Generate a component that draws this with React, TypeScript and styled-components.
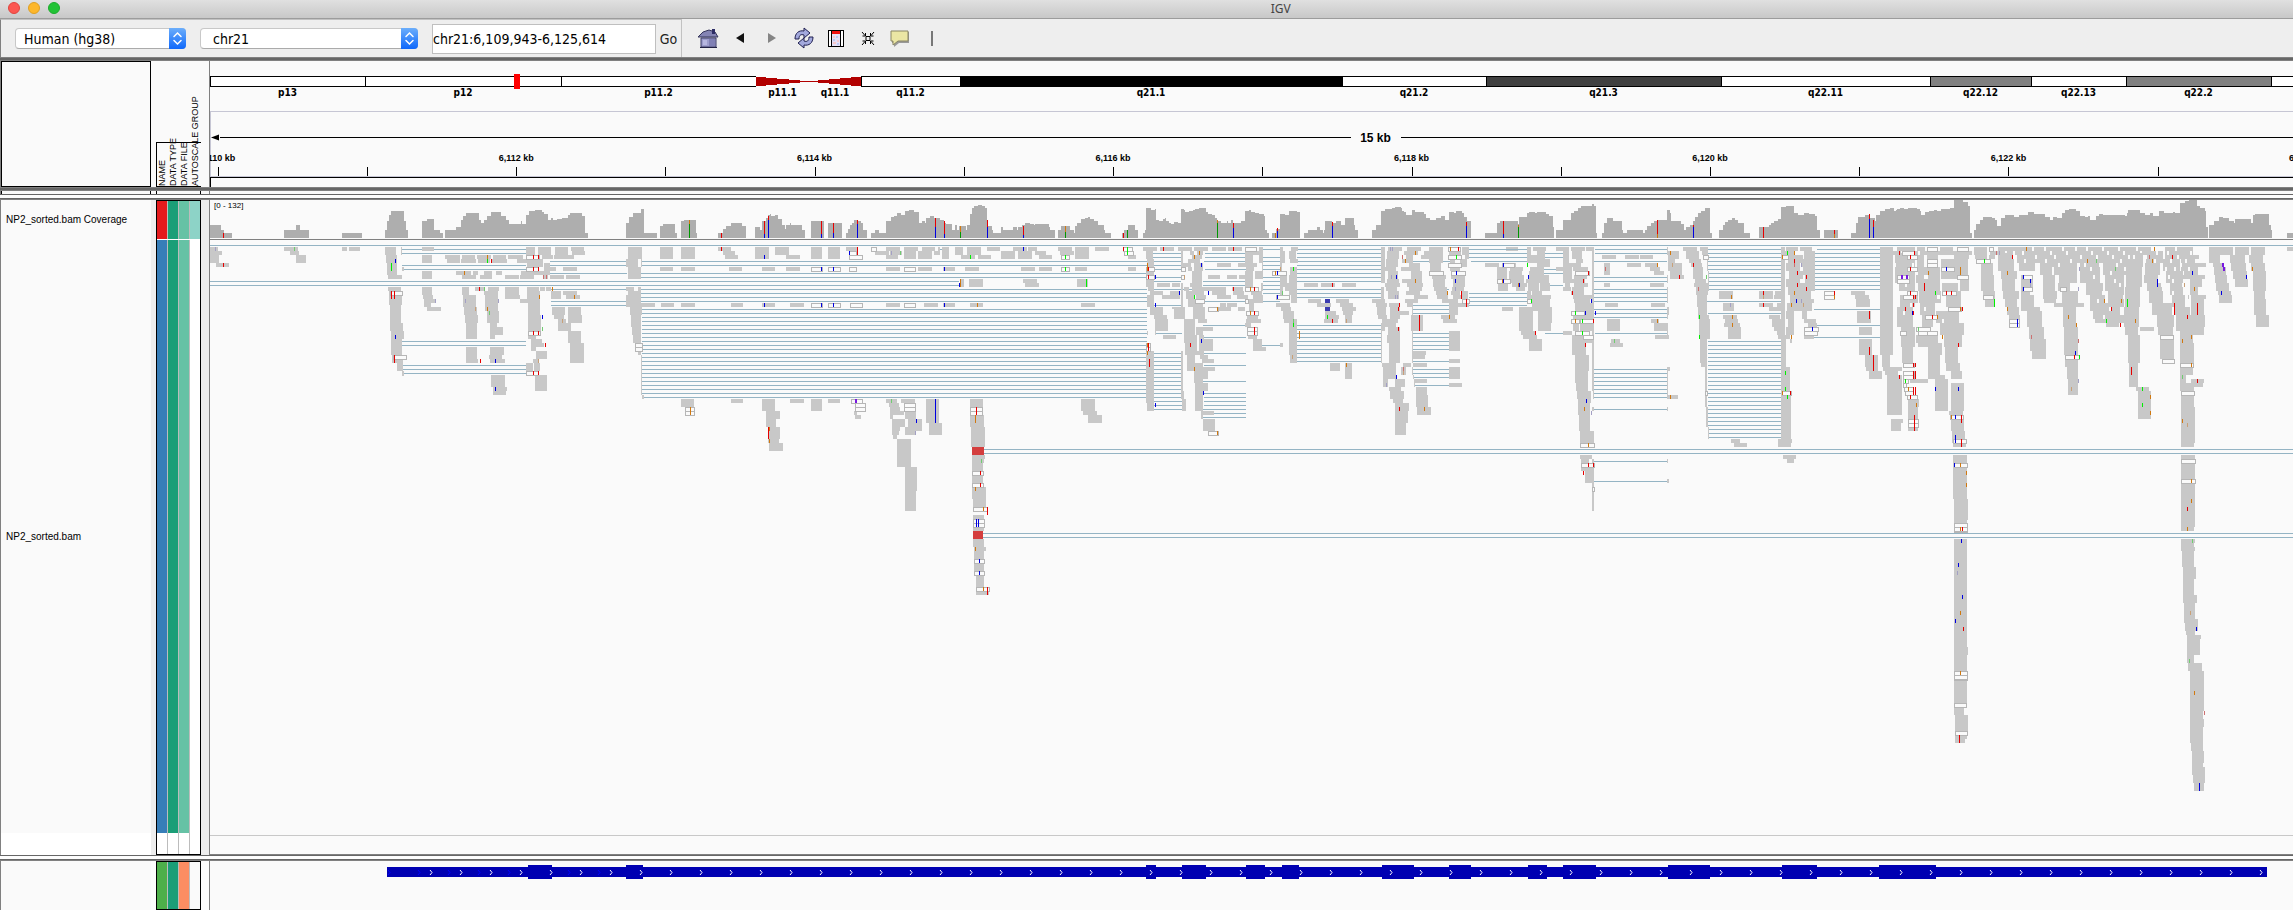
import React from "react";
import styled, { createGlobalStyle } from "styled-components";

const GlobalStyle = createGlobalStyle`
  *, *::before, *::after { box-sizing: border-box; }
  body { margin: 0; background: #fafafa; color: #000; font-family: "Liberation Sans", Arial, sans-serif; }
`;

const uiFont = `"DejaVu Sans Condensed", "Noto Sans", sans-serif`;

/* ---------- window chrome ---------- */

const Window = styled.div`
  display: flex;
  flex-direction: column;
  min-height: 100vh;
  overflow: hidden;
`;

const TitleBar = styled.header`
  display: grid;
  grid-template-columns: 127fr auto 100fr;
  align-items: center;
  height: 19px;
  padding: 0 8px;
  background: linear-gradient(#e0e0e0, #c8c8c8);
  border-bottom: 1px solid #9c9c9c;
`;

const Lights = styled.div`
  display: flex;
  gap: 8px;
  padding-bottom: 2px;
`;

const Light = styled.button<{ $fill: string; $edge: string }>`
  width: 12px;
  height: 12px;
  padding: 0;
  border-radius: 50%;
  border: 1px solid ${(p) => p.$edge};
  background: ${(p) => p.$fill};
`;

const Title = styled.h1`
  margin: 0;
  font: 400 12px/16px "Noto Sans", sans-serif;
  color: #444;
`;

const Toolbar = styled.div`
  display: flex;
  height: 38px;
  background: #eee;
`;

const LocusGroup = styled.form`
  display: flex;
  align-items: center;
  width: 682px;
  padding-left: 14px;
  border: 1px solid #c2c2c2;
  border-left-color: #808080;
  border-bottom: 0;
`;

const SelectBox = styled.label<{ $width: number; $indent: number }>`
  position: relative;
  width: ${(p) => p.$width}px;
  height: 21px;
  margin-right: 14px;
  select {
    width: 100%;
    height: 21px;
    padding: 0 20px 0 ${(p) => p.$indent}px;
    appearance: none;
    border: 1px solid #c8c8c8;
    border-bottom-color: #aaa;
    border-radius: 4px;
    background: #fff;
    color: #000;
    font: 400 14px/18px ${uiFont};
  }
  svg {
    position: absolute;
    top: 0;
    right: 0;
    pointer-events: none;
  }
`;

const LocusInput = styled.input`
  width: 224px;
  height: 30px;
  padding: 0;
  border: 1px solid #bfbfbf;
  background: #fff;
  color: #000;
  font: 400 14px/20px ${uiFont};
`;

const GoButton = styled.button`
  flex: 1;
  padding: 0;
  border: 0;
  background: none;
  color: #222;
  font: 400 14px/20px ${uiFont};
`;

const IconGroup = styled.div`
  display: flex;
  align-items: center;
  gap: 8px;
  padding-left: 14px;
`;

const IconButton = styled.button`
  display: flex;
  align-items: center;
  justify-content: center;
  width: 24px;
  height: 24px;
  padding: 0;
  border: 0;
  background: none;
`;

/* ---------- panels ---------- */

const Divider = styled.div<{ $height: number }>`
  height: ${(p) => p.$height}px;
  background: #666;
  border-top: ${(p) => (p.$height > 2 ? 1 : 0)}px solid #808080;
  border-bottom: ${(p) => (p.$height > 1 ? 1 : 0)}px solid #808080;
`;

const Spacer = styled.div`
  height: 3px;
  background: #fdfdfd;
`;

const Panel = styled.section<{ $gutter: string; $grow?: boolean }>`
  display: grid;
  grid-template-columns: 150px 5px 45px 8px minmax(0, 1fr);
  flex: ${(p) => (p.$grow ? "1 0 auto" : "none")};
  border-left: 1px solid #808080;
  background: ${(p) => p.$gutter};
`;

const NameColumn = styled.div<{ $boxed?: boolean }>`
  grid-column: 1;
  display: flex;
  flex-direction: column;
  background: ${(p) => (p.$boxed ? "#fafafa" : "#fff")};
  border: ${(p) => (p.$boxed ? "1px solid #000" : "0")};
`;

const TrackName = styled.div<{ $height: number }>`
  display: flex;
  align-items: center;
  height: ${(p) => p.$height}px;
  padding-left: 5px;
  background: #fafafa;
  font-size: 10px;
  line-height: 12px;
  white-space: nowrap;
`;

const AttrColumn = styled.div`
  grid-column: 3;
  display: flex;
  flex-direction: column;
  border: 1px solid #000;
`;

const AttrRow = styled.div<{ $height?: number }>`
  display: flex;
  gap: 1px;
  flex: ${(p) => (p.$height ? `0 0 ${p.$height}px` : "1")};
  background: #bcbcbc;
`;

const AttrCell = styled.div<{ $color: string }>`
  flex: 1;
  background: ${(p) => p.$color};
`;

const Plot = styled.div`
  grid-column: 5;
  display: flex;
  flex-direction: column;
  min-width: 0;
  border-left: 1px solid #808080;
  background: #fafafa;
  overflow: hidden;
  svg { display: block; width: 100%; }
`;

/* attribute headings */

const AttrHeadings = styled.div`
  grid-column: 3;
  display: flex;
  align-items: flex-end;
  height: 126px;
`;

const HeadingBox = styled.div`
  display: flex;
  width: 45px;
  height: 45px;
  align-items: flex-end;
  border: solid #000;
  border-width: 1px 0 1px 1px;
`;

const Heading = styled.span`
  width: 11px;
  height: 42px;
  font-size: 9px;
  line-height: 11px;
  writing-mode: vertical-rl;
  transform: rotate(180deg);
  white-space: nowrap;
`;

/* cytobands and ruler */

const Cyto = styled.div`
  position: relative;
  display: flex;
  height: 50px;
  padding-top: 15px;
`;

const BandColumn = styled.div<{ $size: number }>`
  flex: ${(p) => p.$size} 1 0;
  min-width: 0;
  text-align: center;
  font: 700 10px/11px ${uiFont};
`;

const Band = styled.div<{ $fill: string }>`
  height: 11px;
  background: ${(p) => p.$fill};
  border: 1px solid #000;
  border-right: 0;
`;

const Marker = styled.div`
  position: absolute;
  top: 13px;
  left: 14.6%;
  width: 6px;
  height: 15px;
  background: #f00;
`;

const Ruler = styled.div`
  position: relative;
  height: 66px;
  border: solid #c6c6d4;
  border-width: 1px 0 1px 1px;
`;

const SpanRow = styled.div`
  display: flex;
  align-items: center;
  height: 51px;
  font: 700 12px/14px "Liberation Sans", sans-serif;
  svg { flex: none; width: 9px; }
`;

const SpanLine = styled.div<{ $basis: string }>`
  flex: ${(p) => p.$basis};
  height: 1px;
  background: #000;
`;

const SpanText = styled.span`
  flex: none;
  width: 50px;
  text-align: center;
`;

const TickMark = styled.div`
  position: absolute;
  bottom: 0;
  width: 1px;
  height: 9px;
  background: #000;
  span {
    position: absolute;
    bottom: 12px;
    left: 0;
    transform: translateX(-50%);
    font: 700 9px/11px "Liberation Sans", sans-serif;
    white-space: nowrap;
  }
`;

const RegionStrip = styled.div`
  height: 10px;
  border: solid #000;
  border-width: 1px 0 0 1px;
`;

const StripCell = styled.div<{ $column: number }>`
  grid-column: ${(p) => p.$column};
  height: 3px;
  border: solid #000;
  border-width: 0 1px;
`;

const CoverageTrack = styled.div`
  position: relative;
  height: 40px;
  border-bottom: 1px solid #808080;
`;

const Range = styled.span`
  position: absolute;
  top: 1px;
  left: 4px;
  font-size: 8px;
  line-height: 9px;
`;

const AlignmentTrack = styled.div`
  height: 596px;
  border-bottom: 1px solid #c8c8c8;
`;

const PlotFoot = styled.div`
  height: 19px;
  border-bottom: 1px solid #808080;
`;

const GeneTrack = styled.div`
  height: 49px;
`;

/* ---------- data ---------- */

const bands: [number, string, string][] = [
  [155, "p13", "#fff"], [196, "p12", "#fff"], [195, "p11.2", "#fff"],
  [53, "p11.1", "left"], [52, "q11.1", "right"], [99, "q11.2", "#fff"],
  [382, "q21.1", "#000"], [144, "q21.2", "#fff"], [235, "q21.3", "#404040"],
  [209, "q22.11", "#fff"], [101, "q22.12", "#808080"], [95, "q22.13", "#fff"],
  [145, "q22.2", "#808080"], [22, "", "#fff"],
];

const locusStart = 6109.955;
const visibleKb = 13.952;
const kbTicks = Array.from({ length: 15 }, (_, i) => 6110 + i);

type Tile = {
  x: number; y: number; sx: number;
  cover?: string; bars?: string;
  reads?: string; pairs?: string; open?: string; marks?: string; wide?: string; gaps?: string;
};

/* Tiles hold runs of four numbers (left right top bottom), three units to a pixel down the page. */
const tiles: Tile[] = [
  {
    x: 0, y: 180, sx: 2.063,
    cover: "432 135 456 150 462 159 479 174 586 150 610 135 619 150 638 174 706 159 747 174 794 150 798 123 802 105 806 93 834 123 838 150 842 174 871 123 880 117 895 150 908 159 914 174 918 150 940 141 952 120 956 108 962 99 988 120 992 129 998 120 1004 108 1012 96 1034 108 1044 120 1050 132 1074 123 1076 132 1086 105 1092 93 1104 90 1118 96 1122 102 1130 120 1136 114 1140 120 1150 117 1160 114 1172 105 1176 99 1200 108 1206 159 1213 174 1292 129 1298 111 1306 99 1322 87 1329 159 1355 174 1362 138 1368 132 1393 159 1397 174 1405 123 1411 120 1436 159 1438 174 1482 159 1492 147 1498 138 1508 129 1530 138 1538 174 1558 141 1568 174",
    bars: "r 460 159 174 d 1422 132 174 o 1422 120 132 r 1488 159 174",
    reads: "432 450 201 213 432 458 213 225 432 452 225 249 446 472 249 261 586 614 201 213 598 617 213 225 611 631 225 249 706 716 201 213 720 743 201 213 794 817 201 225 796 818 225 249 799 820 249 285 801 829 285 297 801 827 321 333 803 829 333 375 805 828 375 429 805 831 429 453 807 833 453 477 807 829 477 525 809 831 525 549 819 831 549 573 829 833 261 273 829 833 573 588 827 830 201 225 871 895 201 213 871 891 225 249 871 891 273 297 871 891 321 345 873 893 345 357 875 899 357 369 875 890 369 381 881 910 381 393 918 949 225 237 922 949 237 249 953 979 225 237 951 981 237 249 985 1012 225 237 987 1010 237 249 1018 1044 225 237 1016 1046 237 249 1048 1078 225 237 1066 1090 237 249 941 972 273 285 976 986 273 285 953 981 285 297 998 1016 273 285 990 1016 285 297 1024 1036 273 285 1042 1070 285 297 1075 1110 273 285 1073 1102 285 297 953 967 321 345 955 981 345 381 957 985 381 405 959 987 405 429 961 985 429 477 980 1000 321 333 998 1028 333 345 1007 1029 321 333 1000 1028 345 393 1004 1030 393 429 1011 1026 429 441 1011 1038 441 465 1011 1021 465 477 1042 1071 321 345 1042 1073 345 357 1073 1090 357 369 961 985 501 537 961 987 537 549 1011 1040 501 525 1009 1036 525 537 1011 1042 537 549 1013 1042 585 621 1017 1046 621 633 1017 1044 633 645 1086 1104 201 225 1110 1136 201 225 1145 1172 201 225 1178 1204 201 213 1180 1207 213 225 1118 1140 225 237 1143 1161 225 237 1155 1184 225 237 1088 1120 237 261 1122 1134 249 273 1128 1147 261 273 1162 1190 261 273 1110 1134 273 285 1120 1130 285 297 1135 1164 285 297 1168 1197 285 297 1088 1112 321 333 1088 1114 333 369 1090 1114 369 405 1090 1116 405 453 1114 1124 321 333 1126 1136 321 333 1137 1157 333 357 1162 1190 333 345 1167 1197 345 357 1138 1166 381 405 1172 1199 381 405 1143 1164 405 417 1172 1201 405 429 1151 1168 417 429 1151 1178 429 453 1172 1199 453 489 1176 1205 489 549 1090 1106 465 477 1095 1118 477 489 1096 1123 489 501 1096 1106 501 513 1106 1129 513 537 1100 1112 537 549 1086 1100 549 573 1102 1114 549 573 1104 1129 585 633 1296 1325 201 237 1292 1308 237 261 1308 1316 237 261 1322 1325 237 261 1296 1322 261 297 1292 1308 321 333 1316 1322 321 333 1296 1322 333 345 1292 1322 345 381 1300 1324 381 405 1302 1322 405 441 1304 1322 441 465 1306 1322 465 489 1316 1322 513 525 1322 1325 525 645 1325 1328 645 657 1362 1389 201 237 1405 1434 201 237 1482 1509 201 213 1492 1517 213 225 1496 1523 225 237 1362 1389 261 273 1405 1434 261 273 1504 1531 261 273 1322 1351 369 381 1364 1391 369 381 1405 1434 369 381 1508 1533 369 381 1405 1432 657 681 1508 1533 657 669",
    pairs: "829 1086 208 220 830 1086 256 268 829 1086 484 496 831 1086 556 580 1134 1294 244 256 1134 1294 280 280 1137 1294 328 328 1137 1294 364 376 1324 1568 244 256 1322 1568 280 292 432 1568 304 316 1322 1568 328 364 1324 1568 388 652",
    open: "1086 1114 225 237 1086 1112 261 273 804 832 333 345 811 840 525 537 1090 1116 453 465 1086 1112 573 585 1309 1326 489 501 1309 1326 501 513 1413 1434 681 693 1413 1434 693 705",
    marks: "p 443 201 213 r 460 249 261 G 607 201 213 b 814 237 249 g 806 249 273 r 806 333 357 r 812 333 357 b 814 465 477 r 812 525 549 o 1004 225 237 g 1004 237 249 r 1012 237 249 r 1099 225 237 r 1109 225 237 r 1099 261 273 r 1109 261 273 o 958 273 285 R 1121 285 297 R 1127 285 297 r 989 321 333 G 999 321 333 p 960 357 369 p 898 357 369 p 1028 357 369 w 980 381 393 o 1004 381 393 G 1009 393 405 o 1138 321 333 o 1111 345 357 o 1185 345 357 b 1119 405 417 G 1119 441 453 w 1160 417 429 r 1099 453 465 r 1109 453 465 r 1124 489 501 r 991 537 549 b 1022 537 549 w 1109 537 549 r 1099 573 585 r 1109 573 585 b 1022 621 633 r 1488 201 213 o 1423 681 705",
  },
  {
    x: 740, y: 180, sx: 3,
    cover: "0 135 2 141 15 150 18 174 45 150 66 123 78 114 84 105 90 102 94 108 105 105 114 117 126 135 135 147 138 135 150 129 153 135 186 150 195 174 213 123 252 174 264 129 306 174 318 159 324 147 330 135 336 129 342 120 354 123 362 129 369 150 381 174 393 159 405 150 417 159 438 122 453 111 462 108 471 99 483 105 495 92 507 90 522 96 537 129 546 123 555 129 558 114 570 108 582 114 600 120 612 129 618 132 636 150 645 135 651 150 657 138 678 150 681 135 690 102 696 84 702 78 714 75 726 78 735 84 741 123 744 138 756 150 759 159 783 141 789 150 819 141 831 150 834 141 846 135 855 129 870 132 882 135 885 132 927 141 930 150 945 174 954 150 963 138 990 150 1002 159 1005 138 1011 129 1023 117 1035 114 1044 111 1050 117 1062 123 1074 135 1092 150 1095 159 1113 174",
    bars: "r 72 123 162 b 72 162 174 r 84 108 120 b 84 120 174 r 243 123 162 b 243 162 174 r 279 129 159 b 279 159 174 r 351 120 132 b 351 132 174 r 585 114 141 b 585 141 174 r 612 123 162 b 612 162 174 o 660 138 156 d 660 156 174 r 741 120 141 b 741 141 174 r 849 138 165 b 849 165 174 o 975 138 156 d 975 156 174",
    reads: "45 87 201 237 105 147 201 225 138 180 225 237 66 105 261 273 138 180 261 273 0 6 261 273 0 9 369 381 213 246 201 237 264 300 201 237 318 354 201 213 405 447 213 225 438 480 201 213 450 486 213 225 438 474 225 237 492 534 201 213 492 528 213 237 546 585 201 213 534 576 213 237 582 600 213 225 594 600 201 213 606 627 201 237 645 669 201 225 681 723 201 225 663 705 225 237 714 753 225 237 741 780 201 213 783 825 213 237 819 861 201 213 834 876 213 237 864 891 201 213 885 918 213 225 897 936 225 237 954 996 201 213 960 1002 213 225 1005 1047 201 237 1065 1107 201 213 1164 1188 225 237 438 480 261 273 534 576 261 273 609 645 261 273 675 717 261 273 843 885 261 273 897 936 261 273 1005 1041 261 273 1164 1188 261 273 660 672 297 321 687 729 297 321 849 891 297 309 855 897 309 321 1011 1044 297 321 66 105 369 381 150 192 369 381 438 480 369 381 552 594 369 381 609 645 369 381 690 729 369 381 1023 1065 369 381 66 105 657 693 78 120 693 717 78 108 717 741 84 120 741 777 84 117 777 789 87 129 789 813 0 9 657 669 150 192 657 669 213 246 657 693 264 300 657 669 342 350 693 705 345 363 705 717 438 471 657 669 447 477 669 681 450 480 681 693 450 492 693 705 450 460 705 717 456 495 717 741 456 480 741 753 456 477 753 765 459 470 765 777 483 525 657 669 495 528 693 717 504 546 717 741 495 546 741 753 495 528 753 765 471 513 777 861 495 531 861 933 495 528 933 993 558 597 657 729 567 606 729 765 690 729 657 681 690 732 705 741 693 735 741 801 693 732 777 801 696 735 825 837 696 732 837 849 696 729 849 921 696 738 921 957 699 738 957 981 699 732 1005 1017 699 732 1041 1053 699 732 1077 1101 702 738 1101 1113 702 732 1113 1185 708 732 1185 1221 708 747 1233 1245 1023 1065 657 693 1029 1071 693 705 1044 1086 705 729",
    pairs: "0 1220 244 256 0 1220 280 292 0 658 304 316 0 1220 328 364 0 1220 388 652 732 1560 808 820 729 1560 1060 1072 594 606 208 208",
    open: "213 249 261 273 264 303 261 273 327 351 261 273 492 528 261 273 963 990 261 273 213 249 369 381 264 303 369 381 330 369 369 381 492 528 369 381 393 411 201 213 327 351 213 225 327 369 225 237 963 990 225 237 333 369 657 669 345 378 669 681 345 378 681 693 492 528 669 681 492 528 681 693 690 729 681 693 690 729 693 705 696 732 873 885 696 732 909 921 699 744 981 993 699 735 1017 1029 699 735 1029 1041 702 735 1137 1149 702 735 1173 1185 708 750 1221 1233",
    marks: "b 72 225 237 r 351 201 225 b 327 213 225 p 453 213 225 G 480 213 225 g 690 225 237 b 849 201 213 g 975 225 237 b 243 261 273 b 279 261 273 b 612 261 273 g 975 261 273 o 660 297 321 b 657 309 321 g 1038 297 321 b 72 369 381 b 243 369 381 b 279 369 381 b 612 369 381 o 711 369 381 G 453 657 669 v 345 657 669 v 348 657 669 b 585 657 729 b 528 717 729 p 525 753 765 r 84 741 777 o 87 741 753 o 87 777 789 r 708 681 705 o 705 705 729 G 723 837 849 r 720 873 885 r 720 909 921 o 705 921 933 o 729 981 993 r 741 981 1005 b 708 1017 1041 b 714 1017 1041 o 705 1101 1113 b 717 1137 1149 b 717 1173 1185 o 729 1221 1233 r 741 1221 1245",
    wide: "r 696 732 801 825 r 699 729 1053 1077",
  },
  {
    x: 1120, y: 180, sx: 3,
    cover: "6 159 12 150 24 135 45 150 54 174 69 159 75 150 78 84 93 90 105 87 108 120 118 123 130 117 134 114 138 123 148 129 154 132 162 126 174 129 183 87 192 90 195 96 207 93 219 90 225 87 237 84 258 96 264 102 276 105 285 114 291 123 303 129 321 123 324 129 333 120 339 129 363 123 375 93 387 90 393 96 405 99 417 102 432 108 435 150 441 159 447 174 456 159 468 147 480 102 495 105 507 93 531 96 540 174 552 159 564 150 591 141 600 150 609 159 612 150 615 123 636 129 648 123 663 135 675 114 702 135 705 150 714 174 756 150 768 135 783 92 795 87 816 84 825 81 843 84 846 93 852 96 858 105 876 90 885 96 912 102 918 114 930 120 948 114 963 108 975 120 987 96 1002 99 1008 93 1026 99 1032 111 1041 123 1053 174 1095 159 1131 129 1143 123 1194 135 1197 111 1221 99 1230 96 1245 99 1254 105 1260 174",
    bars: "r 9 159 174 d 21 150 174 o 291 120 129 d 291 129 174 r 339 129 144 b 339 144 174 o 465 159 174 r 471 144 153 b 471 153 174 r 636 126 138 b 636 138 174 r 1038 126 138 b 1038 138 174 r 1149 123 162 b 1149 162 174 o 1194 135 141 d 1194 141 174",
    reads: "69 111 201 213 120 162 201 213 174 216 201 213 78 99 213 237 81 102 237 261 78 102 273 285 78 102 297 321 84 102 321 333 111 150 309 321 157 180 309 321 90 129 333 345 150 180 333 345 81 102 345 381 126 168 345 357 168 180 345 357 90 129 381 405 102 141 405 417 105 144 417 453 162 195 381 417 156 195 381 387 81 84 453 465 106 108 453 465 129 168 465 477 78 102 513 669 81 102 669 693 183 189 213 261 183 189 309 381 189 213 249 261 183 189 513 633 183 192 633 657 186 198 657 693 222 264 201 213 210 222 213 225 231 249 213 225 216 246 225 237 204 240 237 249 222 249 249 273 204 216 261 273 216 246 273 309 192 207 321 333 210 246 309 321 216 252 321 345 198 222 333 357 204 249 357 381 228 258 345 357 219 249 369 393 219 255 393 417 225 255 381 405 192 225 417 465 234 262 417 429 192 231 465 489 195 231 489 525 201 225 525 573 228 249 441 465 240 279 441 453 237 252 465 513 249 279 477 513 225 252 513 525 240 264 525 537 246 282 537 549 222 249 549 609 246 285 561 573 240 264 573 597 225 249 609 693 249 264 609 633 243 249 693 717 249 282 693 705 249 285 717 753 276 318 201 213 324 366 201 213 291 333 249 261 354 396 249 261 264 300 285 297 321 351 285 297 357 396 285 297 249 291 321 333 276 318 321 345 336 369 321 333 339 372 333 345 291 333 345 357 351 384 345 357 300 318 369 381 321 351 369 381 291 333 381 393 354 375 381 393 375 399 213 249 387 426 213 225 378 402 249 273 399 411 249 261 375 399 273 321 405 429 273 297 393 426 333 345 399 429 345 369 387 402 357 393 381 414 405 417 378 423 417 429 375 393 429 441 384 411 465 477 399 426 477 501 399 438 501 513 417 429 201 249 426 429 249 285 423 429 309 333 480 489 201 213 480 495 213 249 480 486 249 321 480 501 285 309 486 510 309 321 495 525 321 333 480 489 321 345 480 489 489 501 513 534 201 213 507 528 213 237 510 534 237 249 510 531 261 285 507 531 285 345 513 531 345 369 468 510 369 381 483 513 381 393 489 522 393 417 492 531 417 429 507 531 429 525 510 531 525 549 552 594 309 321 603 645 309 321 666 708 309 321 564 603 357 369 591 633 369 381 648 687 357 369 660 699 369 381 666 708 381 393 615 648 393 405 615 657 405 417 612 654 417 429 669 699 393 405 675 696 405 429 630 660 549 573 675 696 549 597 783 795 201 309 783 792 321 357 795 810 309 321 804 846 201 213 801 837 213 237 798 834 237 261 795 828 261 273 804 834 273 297 801 837 297 309 807 840 309 321 798 831 321 333 804 837 333 357 756 795 357 369 768 801 369 381 771 798 381 405 774 801 405 417 807 837 369 381 810 840 381 417 831 867 393 405 786 834 417 429 786 795 429 453 795 828 417 441 804 840 441 465 801 840 465 489 807 840 489 549 783 786 429 549 786 828 549 561 789 828 561 585 789 828 585 597 789 804 597 621 825 855 597 621 807 843 621 633 810 852 633 657 819 849 657 669 825 867 669 693 825 864 693 729 825 858 729 765 861 903 201 213 852 894 213 225 858 879 225 237 846 878 237 249 867 900 249 273 843 876 261 273 873 906 273 309 846 888 297 309 861 909 309 321 867 906 321 333 858 900 333 345 882 924 345 357 855 894 357 369 861 879 369 381 876 879 369 405 837 867 393 405 873 909 405 453 876 879 453 513 876 918 513 525 876 915 525 537 876 879 537 549 879 921 549 561 849 873 549 561 843 858 561 585 876 879 561 585 879 882 585 597 882 921 597 609 882 885 609 621 888 921 621 645 888 924 645 681 891 933 681 705 912 954 213 225 927 969 201 225 927 945 213 225 927 969 225 249 903 936 225 237 930 963 249 273 936 978 285 297 939 975 297 321 942 981 321 333 948 984 333 345 951 984 345 357 966 990 357 369 987 1023 213 225 990 1005 237 249 990 1020 261 273 993 1035 285 297 999 1035 297 321 996 1032 321 333 993 1020 333 345 999 1032 345 357 987 1014 357 405 1014 1026 369 381 963 1005 405 417 969 1011 417 429 987 1020 453 513 987 1020 537 549 987 1020 561 597 987 1026 609 621 1026 1047 201 225 1035 1047 213 237 1020 1041 237 261 1023 1044 333 357 1026 1047 357 381 1095 1137 249 261 1131 1161 261 297 1134 1164 309 333 1146 1188 249 261 1158 1194 201 213 1170 1209 261 273 1167 1206 273 297 1170 1212 285 309 1176 1221 309 321 1188 1215 321 333 1146 1179 381 393 1197 1260 381 393 1197 1239 393 453 1203 1245 453 465 1209 1251 465 477 1227 1260 477 513 1221 1233 201 249 1221 1233 333 357 1233 1254 225 237 1227 1257 273 321 1218 1254 297 309",
    pairs: "99 186 220 256 102 183 268 268 102 183 292 304 102 216 328 328 102 186 376 376 108 186 460 460 102 186 520 652 99 186 664 688 256 378 220 232 252 378 244 244 256 378 268 268 249 378 304 316 249 378 364 364 249 378 436 436 252 378 472 472 249 378 520 520 252 378 556 556 249 378 604 604 252 378 640 676 249 378 688 712 429 480 208 208 426 480 232 268 429 480 292 340 429 480 364 364 426 480 496 496 534 783 208 208 531 783 220 304 531 783 328 352 531 783 436 544 879 990 244 244 879 987 376 400 879 987 460 508 879 987 544 544 879 987 568 592 885 987 616 616 978 987 328 328 1047 1221 208 208 1047 1221 220 232 1053 1221 244 244 1047 1221 340 376",
    open: "9 39 201 213 12 42 213 225 78 105 261 273 78 105 285 297 183 198 261 273 183 195 285 297 225 255 357 369 78 93 489 501 78 93 501 513 375 411 201 213 375 417 321 333 375 387 357 369 264 297 381 393 378 417 393 405 381 414 441 453 381 414 453 465 264 297 753 765 456 501 273 285 468 510 345 357 927 972 273 285 984 1023 201 213 984 1026 225 237 984 1026 249 261 993 1038 273 285 1026 1050 357 369 1146 1185 249 261 1131 1173 297 309 1221 1236 357 369",
    marks: "r 9 201 213 g 21 201 225 r 129 201 213 o 81 249 273 r 84 261 273 r 84 285 297 b 105 285 297 b 177 333 345 w 192 285 297 b 105 369 381 o 81 489 501 r 84 489 513 o 81 513 525 r 87 537 561 r 210 489 501 o 222 225 237 o 237 213 225 b 243 249 261 g 222 345 357 b 264 333 345 r 339 201 213 r 339 321 333 o 291 381 393 b 243 477 489 o 222 561 573 b 249 633 645 b 105 669 681 o 291 753 765 o 390 321 333 r 402 321 333 o 390 393 405 r 402 393 405 r 402 441 465 w 480 261 273 g 519 261 273 o 465 273 285 b 471 273 285 G 486 333 345 b 471 345 357 G 519 417 429 g 519 429 441 w 516 525 537 o 537 453 477 r 636 309 321 g 621 405 417 r 636 417 429 w 678 417 429 o 678 549 561 p 810 201 213 p 816 201 213 p 813 285 297 b 828 285 297 p 825 345 357 p 831 345 357 r 837 369 381 r 834 381 393 r 834 441 453 b 828 585 597 p 798 609 621 R 849 561 573 w 849 573 585 r 837 681 693 o 912 681 693 r 897 405 453 R 846 225 237 o 855 237 249 o 885 213 225 o 885 297 309 o 990 201 213 r 1014 201 213 g 1008 225 237 b 1008 273 285 b 1005 297 309 p 1005 321 333 o 981 333 345 r 1023 333 357 r 1038 357 381 o 987 405 417 b 1149 249 261 g 1221 249 261 o 1146 297 309 b 1149 297 309 b 1224 285 297 o 1194 309 321 b 1197 309 321 g 1233 357 369 r 1245 453 465",
    wide: "n 615 630 357 369 n 615 630 381 393",
  },
  {
    x: 1500, y: 180, sx: 3,
    cover: "0 123 39 132 57 111 81 99 87 96 96 102 99 108 111 96 138 102 147 108 159 141 162 174 168 150 189 120 213 99 222 93 234 84 243 78 276 72 282 78 288 159 291 174 306 159 312 129 321 114 339 123 366 150 369 159 381 150 429 159 435 150 441 138 453 129 462 123 474 120 501 90 510 99 513 123 543 132 552 150 558 141 570 135 579 123 585 111 594 99 603 93 615 84 630 159 636 174 657 150 669 135 675 126 684 120 696 114 705 120 714 129 732 159 750 174 777 141 807 135 813 129 822 123 834 117 843 81 858 78 882 99 894 105 912 99 927 102 945 108 951 150 960 174 972 150 1014 174 1053 159 1068 129 1074 111 1095 105 1110 114 1125 123 1128 105 1140 92 1155 87 1170 84 1179 93 1188 90 1200 84 1212 87 1224 84 1245 87 1260 174",
    bars: "r 471 120 162 o 471 162 174 r 579 135 141 b 579 141 174 r 789 141 174 r 1002 150 162 o 1002 162 174 r 1107 102 117 b 1107 117 174 r 1119 120 141 b 1119 141 174",
    reads: "99 138 201 213 111 135 213 237 87 117 237 249 111 150 237 261 90 116 261 285 111 132 261 285 84 114 285 297 117 147 285 309 84 117 297 333 120 150 309 333 96 126 333 345 87 117 345 357 117 153 345 357 96 150 357 381 114 156 381 429 114 153 429 453 57 87 405 453 66 102 453 465 69 111 465 477 87 126 477 513 189 216 453 465 168 207 201 213 189 207 213 249 168 189 261 273 189 216 249 309 195 210 309 321 189 213 321 333 213 255 201 213 216 246 213 237 258 282 201 213 228 249 237 249 213 243 249 261 219 264 261 273 222 261 285 297 213 255 297 309 222 264 309 321 216 252 321 345 213 249 333 345 219 276 345 357 222 270 357 369 225 276 369 393 252 276 393 417 219 261 405 417 219 237 429 453 240 276 429 453 216 249 465 477 252 276 477 489 216 258 477 501 216 258 501 525 225 267 525 573 225 264 573 609 228 264 609 633 231 273 633 657 234 273 657 669 234 270 669 705 237 270 705 753 240 282 753 789 240 276 825 837 243 267 837 849 243 282 861 873 255 282 873 909 276 282 201 633 279 282 633 657 276 282 681 693 276 282 837 993 306 348 225 237 375 417 225 237 420 459 225 237 381 423 249 261 435 474 249 261 312 330 249 285 450 480 261 273 462 492 273 285 312 330 309 321 450 492 309 321 315 354 369 381 453 495 369 381 321 360 417 453 453 477 417 429 462 504 429 453 465 507 465 477 333 360 477 489 330 369 489 501 501 504 201 225 501 504 285 309 501 504 321 369 501 507 381 405 501 504 405 417 501 504 453 465 501 510 561 573 501 504 573 657 504 534 645 657 501 504 681 693 501 504 837 849 501 507 897 909 504 537 213 237 504 525 237 249 504 546 249 273 510 546 273 285 510 552 285 297 549 591 201 213 558 597 213 237 567 603 237 249 573 606 249 261 579 609 261 297 585 618 297 309 582 624 309 321 588 624 321 345 591 621 345 381 594 621 381 405 594 627 405 417 597 630 417 477 600 621 477 549 603 621 549 561 600 624 201 213 606 624 213 225 621 624 237 273 624 627 273 333 615 621 561 681 618 624 681 741 624 627 741 777 657 699 333 345 657 699 345 357 669 702 369 393 669 711 405 417 675 714 417 429 672 720 429 441 684 723 441 477 777 819 333 357 777 819 369 381 825 852 333 345 822 855 345 357 831 855 369 381 807 849 381 393 807 840 405 417 816 852 417 441 822 852 441 453 831 855 453 465 834 870 465 477 843 855 201 477 843 858 477 561 843 870 561 633 843 873 633 777 834 876 777 789 834 873 789 801 849 888 825 837 861 882 837 849 858 894 201 213 852 882 213 225 864 909 225 249 858 900 249 273 867 909 273 297 858 900 297 321 864 903 321 345 870 912 345 369 861 900 369 393 858 882 393 417 864 882 417 441 858 882 441 465 870 876 477 489 900 936 201 213 912 945 213 237 906 942 237 261 909 939 261 285 915 945 285 309 900 942 309 333 903 933 333 357 909 942 357 369 900 936 369 393 906 921 393 417 912 948 417 429 924 951 429 441 912 942 465 477 939 945 237 333 693 720 777 789 702 741 789 801 1053 1095 333 345 1065 1107 345 357 1068 1110 357 381 1071 1113 393 429 1077 1116 441 465 1077 1116 477 525 1095 1134 525 561 1098 1134 561 573 1107 1146 573 597",
    pairs: "135 189 220 232 132 189 268 280 138 189 316 316 135 189 460 460 0 81 208 244 0 81 340 376 285 501 208 220 282 501 244 244 282 501 292 304 282 501 328 364 282 501 388 412 285 501 460 460 282 501 568 652 282 501 688 688 282 501 844 844 282 501 904 904 624 843 208 268 627 843 280 328 621 843 364 364 624 843 400 400 624 843 484 736 627 843 748 772 950 1140 208 208 942 1140 220 268 945 1140 280 328 942 1140 388 388 945 1140 436 436 942 1140 472 472",
    open: "225 270 273 285 213 255 393 405 213 240 417 429 240 282 417 429 225 270 453 465 249 282 465 477 240 285 789 801 243 285 849 861 276 285 921 933 609 627 225 237 615 624 633 645 846 867 225 237 846 876 633 645 912 957 441 453 912 954 453 465 972 1005 333 345 972 1005 345 357",
    marks: "g 81 249 261 b 84 285 297 b 9 249 261 g 93 357 369 r 105 453 465 r 264 273 285 r 249 297 309 r 216 333 345 b 273 357 369 g 225 393 405 b 255 393 405 b 285 393 405 o 225 417 429 g 246 417 429 r 279 417 429 g 246 453 465 r 255 489 501 b 258 657 669 o 252 681 693 p 273 693 705 o 264 789 801 r 264 849 861 r 279 849 861 r 249 873 885 R 315 261 273 o 471 249 261 o 471 417 429 G 342 477 489 o 510 213 225 w 516 249 261 r 537 285 297 r 579 249 261 o 510 645 657 R 594 321 333 g 597 405 417 g 597 465 477 G 618 285 297 o 693 345 357 p 690 369 381 o 696 405 417 o 696 429 441 r 789 333 345 w 789 345 357 r 789 369 381 g 861 213 225 o 846 225 237 o 882 213 225 r 882 237 249 R 882 249 261 p 903 249 261 r 891 273 285 r 918 285 297 r 891 309 321 r 918 321 333 o 882 333 345 b 888 357 369 p 903 357 369 o 873 369 381 w 909 369 381 o 873 465 477 g 855 573 585 g 855 621 633 o 846 633 645 r 870 633 645 g 861 645 657 b 936 441 453 r 1002 333 345 o 1002 345 357 r 1107 393 417 r 1107 501 525 r 1119 525 573",
  },
  {
    x: 1890, y: 180, sx: 3,
    cover: "0 84 12 93 21 87 54 84 81 93 93 105 105 96 117 93 132 90 141 93 153 87 180 84 192 60 219 66 234 78 240 159 246 174 252 150 258 132 270 120 279 111 306 114 315 120 321 138 333 114 345 105 372 111 387 105 414 96 432 102 465 111 480 120 490 111 500 114 516 99 525 90 537 87 558 93 570 108 585 111 594 108 600 120 618 108 627 102 640 105 705 108 711 99 714 90 750 99 765 105 780 99 790 108 807 93 822 99 850 96 855 99 870 69 885 63 897 60 921 78 930 84 945 93 948 141 954 174 957 135 972 123 987 111 1000 114 1018 123 1032 129 1035 117 1083 129 1089 105 1095 102 1137 135 1143 150 1146 174 1191 159 1209 174",
    reads: "-30 9 201 525 -24 0 525 561 -21 36 561 573 -15 24 573 585 -9 36 585 705 3 39 717 729 3 33 729 753 9 246 213 225 21 78 201 213 81 105 201 213 111 144 213 237 150 189 201 225 192 237 213 225 15 75 225 309 81 102 225 261 78 114 261 309 114 150 261 309 153 204 237 297 204 234 237 285 210 236 297 333 27 75 309 333 84 150 309 333 156 204 309 333 168 213 333 381 30 84 345 381 87 153 333 369 90 135 369 405 96 130 405 441 21 70 381 441 34 75 441 501 36 69 501 549 138 207 393 429 150 222 429 465 78 144 465 489 84 117 489 501 114 156 489 525 114 150 525 597 162 216 465 501 165 204 501 549 168 210 549 573 183 216 573 597 135 174 597 693 135 165 585 597 183 222 609 693 177 219 693 705 183 221 717 753 186 225 753 789 190 228 789 801 53 87 657 681 54 84 681 717 54 84 741 753 60 114 597 609 192 237 225 237 1191 1209 201 213 252 291 201 225 255 315 225 237 261 300 237 249 273 309 249 285 273 312 285 333 279 315 333 357 285 315 357 381 300 369 213 225 324 381 201 213 324 372 225 273 333 381 273 297 336 375 297 333 339 387 333 357 345 381 357 381 351 387 381 405 357 390 405 441 375 435 201 225 381 450 225 249 387 435 249 273 393 429 285 333 393 420 333 393 396 432 345 381 402 450 381 393 411 456 393 441 417 462 441 477 420 468 477 513 426 468 513 537 435 510 201 249 450 520 249 285 459 495 285 333 459 501 333 357 462 498 345 369 492 582 369 381 510 585 201 249 507 560 249 309 504 540 309 333 516 564 333 381 519 558 381 441 522 564 441 525 525 564 537 561 531 564 561 597 534 564 597 645 570 660 201 249 570 630 249 309 588 640 309 345 600 645 345 393 609 650 393 417 615 690 417 429 648 687 429 441 600 660 369 393 612 690 381 417 648 705 405 429 640 720 201 285 645 702 285 333 655 702 333 381 700 760 201 261 708 756 261 321 705 750 321 381 702 747 381 441 705 745 441 465 714 750 465 549 717 744 549 621 750 790 201 225 768 820 213 249 765 810 249 285 762 804 285 309 771 816 309 333 777 820 333 369 787 845 369 405 801 852 405 441 750 792 441 453 804 850 441 465 810 852 477 537 738 777 621 633 744 783 633 717 825 880 201 237 820 870 237 273 828 880 273 309 840 880 309 345 846 885 345 381 852 900 381 405 858 909 405 453 870 909 453 489 870 912 489 549 870 909 561 585 870 888 585 609 870 912 609 633 903 942 597 609 903 939 609 621 873 912 645 681 873 915 681 789 873 912 789 801 870 909 201 237 873 927 225 237 873 915 237 273 912 948 249 261 882 925 261 285 873 945 285 297 900 936 297 321 900 925 321 345 894 948 345 357 903 942 357 405 909 945 405 441 903 942 441 465 957 999 201 225 957 990 225 249 969 1002 249 261 972 1008 261 285 975 1011 285 309 978 1017 309 333 984 1023 333 345 987 1026 345 369 990 1029 201 225 1020 1065 225 249 1023 1068 249 273 1029 1071 273 297 1035 1074 297 321 1035 1077 201 225 1083 1125 201 225 1077 1119 225 249 1083 1125 249 273 1089 1128 273 333 1092 1125 333 357 1092 1128 357 405 1098 1137 405 441 189 231 825 957 192 234 957 1020 873 915 825 1020",
    gaps: "75 81 201 213 105 111 201 213 144 150 201 213 33 39 213 219 84 90 213 225 75 81 225 237 105 111 237 249 9 18 249 261 66 72 249 261 78 84 273 285 102 114 285 297 45 51 309 321 75 84 321 333 9 15 333 345 60 66 369 381 75 84 369 381 39 45 393 405 102 108 381 393 141 150 345 357 153 159 369 381 81 87 429 441 27 33 453 465 144 150 477 489 156 162 417 429 291 297 225 237 318 324 225 249 345 351 213 219 366 372 225 237 396 402 213 225 426 432 201 213 402 408 237 249 435 441 225 237 462 468 201 213 480 486 213 225 465 471 237 249 492 498 225 237 516 522 201 213 504 510 249 261 486 492 261 285 528 534 213 225 555 561 201 213 540 546 237 249 570 576 225 237 588 594 201 213 603 609 213 225 582 588 249 261 618 624 225 237 636 642 201 213 627 633 249 261 600 606 261 273 609 615 285 297 651 657 213 225 633 639 273 285 666 672 225 237 684 690 201 213 678 684 249 261 699 705 213 225 690 696 237 249 660 666 273 285 714 720 225 237 672 678 297 309 738 744 201 213 702 708 261 273 729 735 225 237 687 693 309 321 750 756 213 219 765 771 225 237 783 789 201 213 699 705 345 357 636 642 333 345 657 663 381 393 639 645 405 417 621 627 357 369 798 804 213 225 813 819 201 213 792 798 237 249 810 816 249 261 831 837 213 225 855 861 201 213 840 846 237 249 825 831 261 273 861 867 225 237 834 840 285 297 813 819 309 321 852 858 261 273 870 876 249 261 846 852 297 309 900 906 213 225 885 891 237 249 894 900 261 273 876 882 309 321 897 903 345 357 846 852 333 345 888 900 597 609",
    open: "111 144 201 213 201 237 201 213 36 75 213 225 51 84 225 237 111 144 237 249 111 144 249 261 51 84 261 273 153 195 261 273 21 60 285 297 21 60 297 309 201 237 285 297 51 84 333 345 39 75 345 357 156 201 333 345 174 216 381 393 105 144 405 417 78 123 441 453 84 114 453 465 111 144 453 465 30 51 453 465 39 75 549 561 39 75 573 585 39 75 585 597 39 57 597 609 39 50 609 621 42 72 621 633 45 72 633 645 51 84 645 657 54 87 717 729 54 87 729 741 180 222 705 717 189 231 777 789 297 312 201 213 258 303 237 249 279 312 345 357 357 390 417 429 357 390 429 441 396 429 285 297 396 429 321 333 510 531 321 333 525 570 525 537 810 852 465 477 816 855 537 549 870 912 549 561 873 915 633 645 192 234 849 861 873 918 837 849 873 918 897 909",
    marks: "r 27 213 225 r 72 213 225 r 60 225 237 r 60 261 273 o 114 273 285 b 168 261 273 o 210 261 285 v 33 285 297 v 36 285 297 v 48 285 297 v 51 285 297 r 102 309 333 r 60 333 345 g 135 333 345 r 168 333 345 r 183 333 345 r 69 345 357 r 75 345 357 r 69 369 381 r 45 381 393 o 210 381 393 r 216 381 393 b 66 393 405 r 69 393 405 r 126 405 417 o 141 405 417 G 84 441 453 o 156 465 477 r 204 489 501 r 69 549 561 r 75 549 561 r 69 573 597 r 75 573 597 r 27 585 597 g 45 597 609 o 54 621 633 r 69 621 645 r 75 621 645 r 60 645 657 o 78 669 681 r 72 705 753 b 135 621 633 b 204 621 633 o 183 705 717 b 195 705 717 r 213 705 729 b 195 765 789 r 213 777 801 R 318 213 225 p 327 213 225 g 282 237 249 g 312 357 381 o 351 273 285 r 366 225 237 o 408 201 213 b 399 285 297 b 420 297 309 p 420 309 321 b 399 321 333 o 351 381 393 b 381 417 441 R 423 465 477 o 534 405 417 o 558 429 441 R 564 477 489 b 555 513 525 r 552 525 537 g 567 525 537 p 567 261 273 o 591 237 249 G 618 237 249 G 675 261 273 p 564 321 333 p 564 597 609 w 543 621 633 o 642 357 369 r 663 381 393 g 648 417 429 r 690 429 441 o 693 357 369 g 711 357 381 o 735 417 429 r 723 561 585 g 756 621 633 g 756 669 681 o 780 645 657 o 780 693 705 o 792 201 213 R 777 225 237 o 786 237 249 b 801 297 321 r 846 225 237 r 852 369 405 r 891 405 417 w 882 309 321 b 906 273 285 o 912 321 333 r 921 369 405 o 903 465 477 o 876 477 489 o 903 549 561 G 876 585 597 r 921 597 609 o 876 717 729 w 891 729 741 v 996 249 261 v 999 249 261 v 999 261 273 v 1002 261 273 b 993 333 345 b 1068 285 297 o 1086 261 273 b 192 849 861 o 210 849 861 o 228 873 885 o 228 909 921 o 903 897 909 o 903 957 969 r 891 981 993",
  },
  {
    x: 1930, y: 500, sx: 3,
    reads: "72 114 0 33 72 111 33 69 72 111 117 441 72 114 441 465 72 111 465 513 72 111 540 609 72 102 621 645 75 114 645 693 75 111 705 717 75 105 717 729 753 795 0 81 753 792 81 93 753 792 117 153 786 795 117 129 786 795 141 153 756 792 153 201 759 798 201 237 759 792 237 309 786 801 285 309 762 795 309 369 792 804 357 393 765 795 369 393 768 795 393 405 771 810 405 465 804 813 405 417 771 792 465 489 774 816 489 513 780 822 513 633 780 819 633 729 816 822 657 681 783 819 729 753 786 822 753 789 786 819 789 801 786 825 801 825 789 825 825 849 792 822 849 873",
    open: "72 114 69 81 72 114 81 95 72 114 513 525 72 114 525 539 72 111 609 621 75 114 693 705",
    marks: "o 90 81 93 r 96 81 93 b 93 117 129 b 84 189 201 p 81 213 225 b 96 285 297 o 90 333 345 b 75 357 369 r 99 381 393 o 90 513 525 r 87 705 729 o 783 0 9 r 771 21 33 o 771 81 93 G 786 117 129 w 780 333 345 b 798 381 393 G 777 477 489 o 792 573 585 R 822 633 645 b 807 849 873",
  },
];

const markColors: Record<string, string> = {
  r: "#e60000", R: "#cc7070", b: "#0000e0", p: "#a3a0c4", g: "#00f000", G: "#70cc70",
  o: "#d07810", w: "#c8a078", v: "#7818e0", d: "#009800",
};

const nums = (s = "") => s.split(" ").filter(Boolean).map(Number);
const quads = (s?: string) => {
  const n = nums(s);
  return Array.from({ length: n.length / 4 }, (_, i) => n.slice(i * 4, i * 4 + 4));
};
const colored = (s = "") => {
  const t = s.split(" ").filter(Boolean);
  return Array.from({ length: t.length / 4 }, (_, i) => ({
    kind: t[i * 4], v: t.slice(i * 4 + 1, i * 4 + 4).map(Number),
  }));
};
const px = (t: Tile, x: number) => Math.round(t.x + x / t.sx);
const py = (t: Tile, y: number) => Math.round(t.y + y / 3);

const boxPath = (t: Tile, s?: string) =>
  quads(s).map(([a, b, c, d]) => `M${px(t, a)} ${py(t, c)}H${px(t, b)}V${py(t, d)}H${px(t, a)}Z`).join("");

const linePath = (t: Tile, s?: string) =>
  quads(s).map(([a, b, c, d]) => {
    let out = "";
    for (let y = c; y <= d; y += 12) {
      const top = t.y + Math.floor(y / 3);
      out += `M${px(t, a)} ${top}H${px(t, b)}v1H${px(t, a)}Z`;
    }
    return out;
  }).join("");

const coverPath = (t: Tile) => {
  const n = nums(t.cover);
  if (!n.length) return "";
  let out = `M${px(t, n[0])} 238`;
  for (let i = 0; i < n.length; i += 2) out += `H${px(t, n[i])}V${py(t, n[i + 1])}`;
  return out + "Z";
};

const exons = [
  [528, 552], [626, 643], [1146, 1156], [1182, 1206], [1246, 1265], [1282, 1299], [1382, 1414],
  [1449, 1471], [1528, 1547], [1563, 1596], [1668, 1710], [1782, 1817], [1879, 1936],
];

/* ---------- drawings ---------- */

function Marks({ tile, data }: { tile: Tile; data?: string }) {
  return (
    <>
      {colored(data).map(({ kind, v: [x, a, b] }, i) => (
        <rect key={i} x={px(tile, x)} y={py(tile, a)} width={1} height={py(tile, b) - py(tile, a)} fill={markColors[kind]} />
      ))}
    </>
  );
}

function Coverage() {
  return (
    <svg viewBox="210 200 2083 39" height="39" preserveAspectRatio="none" shapeRendering="crispEdges" role="img" aria-label="Read coverage">
      {tiles.map((t, i) => <path key={i} d={coverPath(t)} fill="#aeaeae" />)}
      {tiles.map((t, i) => <Marks key={i} tile={t} data={t.bars} />)}
    </svg>
  );
}

function Alignments() {
  return (
    <svg viewBox="210 240 2083 595" height="595" preserveAspectRatio="none" shapeRendering="crispEdges" role="img" aria-label="Aligned reads">
      <path d="M210 245H2293v1H210ZM1120 449H2293v1H1120ZM1120 453H2293v1H1120ZM1120 533H2293v1H1120ZM1120 537H2293v1H1120Z" fill="#94b4c4" />
      {tiles.map((t, i) => (
        <g key={i}>
          <path d={linePath(t, t.pairs)} fill="#94b4c4" />
          <path d={boxPath(t, t.reads)} fill="#c8c8c8" />
          <path d={boxPath(t, t.gaps)} fill="#fafafa" />
        </g>
      ))}
      {tiles.map((t, i) => (
        <g key={i}>
          {quads(t.open).map(([a, b, c, d], k) => (
            <g key={k}>
              <rect x={px(t, a)} y={py(t, c)} width={px(t, b) - px(t, a)} height={py(t, d) - py(t, c) + 1} fill="#b6b6b6" />
              <rect x={px(t, a) + 1} y={py(t, c) + 1} width={Math.max(1, px(t, b) - px(t, a) - 2)} height={3} fill="#fafafa" />
            </g>
          ))}
          {quads((t.wide || "").replace(/[rn] /g, "")).map(([a, b, c, d], k) => (
            <rect key={k} x={px(t, a)} y={py(t, c)} width={px(t, b) - px(t, a)} height={py(t, d) - py(t, c)} fill={(t.wide || "")[0] === "r" ? "#d43e3e" : "#3c3cb0"} />
          ))}
          <Marks tile={t} data={t.marks} />
        </g>
      ))}
    </svg>
  );
}

function Gene() {
  const arrows = Array.from({ length: 62 }, (_, i) => 430 + i * 30);
  const dim = [388, 418, 448, 478, 508, 568, 598].map((x) => `M${x} 870l2 2.500l-2 2.500`).join("");
  return (
    <svg viewBox="210 861 2083 49" height="49" preserveAspectRatio="none" role="img" aria-label="Gene model">
      <rect x="387" y="867" width="1880" height="10" fill="#0000b2" />
      {exons.map(([a, b]) => <rect key={a} x={a} y="865" width={b - a} height="14" fill="#0000b2" />)}
      <path d={dim} fill="none" stroke="#0000ff" />
      <path d={arrows.map((x) => `M${x} 870l2 2.500l-2 2.500`).join("")} fill="none" stroke="#fff" />
    </svg>
  );
}

function Centromere({ side }: { side: string }) {
  return (
    <svg width="100%" height="11" viewBox="0 0 52 11" preserveAspectRatio="none" shapeRendering="crispEdges" aria-hidden="true">
      <path
        fill="#b20000"
        transform={side === "left" ? undefined : "matrix(-1 0 0 1 52 0)"}
        d="M0 1H10V2H21V3H32V4H43V5H52V6H43V7H32V8H21V9H10V10H0Z"
      />
    </svg>
  );
}

function Stepper() {
  return (
    <svg width="17" height="21" viewBox="0 0 17 21" aria-hidden="true">
      <defs>
        <linearGradient id="stepper" x1="0" y1="0" x2="0" y2="1">
          <stop offset="0" stopColor="#6caefb" />
          <stop offset="1" stopColor="#0f68fb" />
        </linearGradient>
      </defs>
      <path d="M0 0H13a4 4 0 0 1 4 4V17a4 4 0 0 1-4 4H0Z" fill="url(#stepper)" />
      <path d="M5 8.500L8.500 5L12 8.500M5 12.500L8.500 16L12 12.500" fill="none" stroke="#fff" strokeWidth="1.500" strokeLinecap="round" />
    </svg>
  );
}

const HomeIcon = () => (
  <svg width="22" height="20" viewBox="0 0 22 20" aria-hidden="true">
    <path d="M4 10H19V19H4Z" fill="#9d9dcc" stroke="#3d3d66" />
    <path d="M12 11H18V18H12Z" fill="#8181b5" />
    <path d="M1 9L6 4L12 2L18 4L21 9Z" fill="#8484b4" stroke="#34345a" />
    <path d="M15 1H18V6H15Z" fill="#2d2d66" />
    <path d="M3 19.500H20" stroke="#222244" />
    <path d="M6 12H10V17H6Z" fill="#b7b7e0" />
  </svg>
);
const TriangleIcon = ({ color, flip }: { color: string; flip?: boolean }) => (
  <svg width="10" height="12" viewBox="0 0 10 12" aria-hidden="true">
    <path d={flip ? "M1 1V11L9 6Z" : "M9 1V11L1 6Z"} fill={color} />
  </svg>
);
const RefreshIcon = () => (
  <svg width="22" height="22" viewBox="0 0 22 22" aria-hidden="true">
    <g fill="#a3a9dd" stroke="#202050" strokeLinejoin="round">
      <path d="M2 12C2 6 6 3 11 4V1L17 6L11 11V8C8 7 6 8 6 12Z" />
      <path d="M20 10C20 16 16 19 11 18V21L5 16L11 11V14C14 15 16 14 16 10Z" />
    </g>
  </svg>
);
const RegionIcon = () => (
  <svg width="16" height="17" viewBox="0 0 16 17" shapeRendering="crispEdges" aria-hidden="true">
    <path d="M0 0H16V17H0Z" fill="#000" />
    <path d="M1 1H3V16H1ZM13 1H15V16H13Z" fill="#fff" />
    <path d="M4 1H12V16H4Z" fill="#e4e0f6" />
    <path d="M4 1H12V4H4Z" fill="#f01010" />
    <path d="M5 6H7V8H5ZM9 10H11V12H9ZM5 12H8V14H5Z" fill="#f6c8cc" />
    <path d="M8 6H10V8H8ZM5 9H7V11H5ZM9 13H11V15H9Z" fill="#bcc8f4" />
  </svg>
);
const ShrinkIcon = () => (
  <svg width="14" height="15" viewBox="0 0 14 15" aria-hidden="true">
    <path d="M5 5.500H9V9.500H5ZM1 1L4 4.500M13 1L10 4.500M1 14L4 10.500M13 14L10 10.500M4.500 2V5H1.500M9.500 2V5H12.500M4.500 13V10H1.500M9.500 13V10H12.500" fill="none" stroke="#000" />
  </svg>
);
const BubbleIcon = () => (
  <svg width="20" height="17" viewBox="0 0 20 17" aria-hidden="true">
    <path d="M2 2H19V13H9L4 17V13H2Z" fill="#999" />
    <path d="M1 1H18V11H8L3 15V11H1Z" fill="#ebe6a4" stroke="#8a8664" />
  </svg>
);

/* ---------- page ---------- */

export default function App() {
  return (
    <Window>
      <GlobalStyle />
      <TitleBar>
        <Lights>
          <Light aria-label="Close" $fill="#fc5650" $edge="#e0443e" />
          <Light aria-label="Minimize" $fill="#fdb72b" $edge="#dfa023" />
          <Light aria-label="Zoom" $fill="#22c336" $edge="#1bac2c" />
        </Lights>
        <Title>IGV</Title>
      </TitleBar>

      <Toolbar>
        <LocusGroup onSubmit={(e) => e.preventDefault()}>
          <SelectBox $width={171} $indent={8}>
            <select aria-label="Genome"><option>Human (hg38)</option></select>
            <Stepper />
          </SelectBox>
          <SelectBox $width={218} $indent={12}>
            <select aria-label="Chromosome"><option>chr21</option></select>
            <Stepper />
          </SelectBox>
          <LocusInput aria-label="Locus" defaultValue="chr21:6,109,943-6,125,614" />
          <GoButton type="submit">Go</GoButton>
        </LocusGroup>
        <IconGroup>
          <IconButton aria-label="Whole genome"><HomeIcon /></IconButton>
          <IconButton aria-label="Back"><TriangleIcon color="#111" /></IconButton>
          <IconButton aria-label="Forward"><TriangleIcon color="#858585" flip /></IconButton>
          <IconButton aria-label="Refresh"><RefreshIcon /></IconButton>
          <IconButton aria-label="Define region"><RegionIcon /></IconButton>
          <IconButton aria-label="Fit to window"><ShrinkIcon /></IconButton>
          <IconButton aria-label="Popup text"><BubbleIcon /></IconButton>
          <IconButton aria-label="Ruler">
            <svg width="2" height="15" aria-hidden="true"><rect width="2" height="15" fill="#777" /></svg>
          </IconButton>
        </IconGroup>
      </Toolbar>

      <Divider $height={4} />
      <Panel $gutter="#fafafa">
        <NameColumn $boxed />
        <AttrHeadings>
          <HeadingBox>
            <Heading>NAME</Heading>
            <Heading>DATA TYPE</Heading>
            <Heading>DATA FILE</Heading>
            <Heading>AUTOSCALE GROUP</Heading>
          </HeadingBox>
        </AttrHeadings>
        <Plot>
          <Cyto>
            {bands.map(([size, name, fill], i) => (
              <BandColumn key={i} $size={size}>
                {fill === "left" || fill === "right" ? <Centromere side={fill} /> : <Band $fill={fill} />}
                {name}
              </BandColumn>
            ))}
            <Marker />
          </Cyto>
          <Ruler>
            <SpanRow>
              <svg height="7" viewBox="0 0 9 7" aria-hidden="true"><path d="M0 3.500L8 0.500V6.500Z" /></svg>
              <SpanLine $basis="0 0 54.300%" />
              <SpanText>15 kb</SpanText>
              <SpanLine $basis="1" />
            </SpanRow>
            {kbTicks.map((kb) => (
              <TickMark key={kb} style={{ left: `${((kb - locusStart) / visibleKb) * 100}%` }}>
                {kb % 2 === 0 && <span>{kb.toLocaleString("en-US")} kb</span>}
              </TickMark>
            ))}
          </Ruler>
          <RegionStrip />
        </Plot>
      </Panel>
      <Divider $height={4} />
      <Panel $gutter="#fafafa">
        <StripCell $column={1} />
        <StripCell $column={3} />
        <Plot />
      </Panel>
      <Divider $height={1} />
      <Spacer />
      <Divider $height={2} />

      <Panel $gutter="#eee">
        <NameColumn>
          <TrackName $height={40}>NP2_sorted.bam Coverage</TrackName>
          <TrackName $height={593}>NP2_sorted.bam</TrackName>
        </NameColumn>
        <AttrColumn>
          <AttrRow $height={38}>
            {["#e41a1c", "#1b9e77", "#66c2a5", "#8dd3c7"].map((c) => <AttrCell key={c} $color={c} />)}
          </AttrRow>
          <AttrRow $height={1}><AttrCell $color="#fff" /></AttrRow>
          <AttrRow $height={593}>
            {["#377eb8", "#1b9e77", "#66c2a5", "#fff"].map((c) => <AttrCell key={c} $color={c} />)}
          </AttrRow>
          <AttrRow>
            {[0, 1, 2, 3].map((c) => <AttrCell key={c} $color="#fff" />)}
          </AttrRow>
        </AttrColumn>
        <Plot>
          <CoverageTrack>
            <Coverage />
            <Range>[0 - 132]</Range>
          </CoverageTrack>
          <AlignmentTrack><Alignments /></AlignmentTrack>
          <PlotFoot />
        </Plot>
      </Panel>
      <Divider $height={1} />
      <Spacer />
      <Divider $height={2} />

      <Panel $gutter="#fdfdfd" $grow>
        <NameColumn>
          <TrackName $height={49} />
        </NameColumn>
        <AttrColumn>
          <AttrRow>
            {["#4daf4a", "#1b9e77", "#fc8d62", "#fafafa"].map((c) => <AttrCell key={c} $color={c} />)}
          </AttrRow>
        </AttrColumn>
        <Plot>
          <GeneTrack><Gene /></GeneTrack>
        </Plot>
      </Panel>
    </Window>
  );
}
